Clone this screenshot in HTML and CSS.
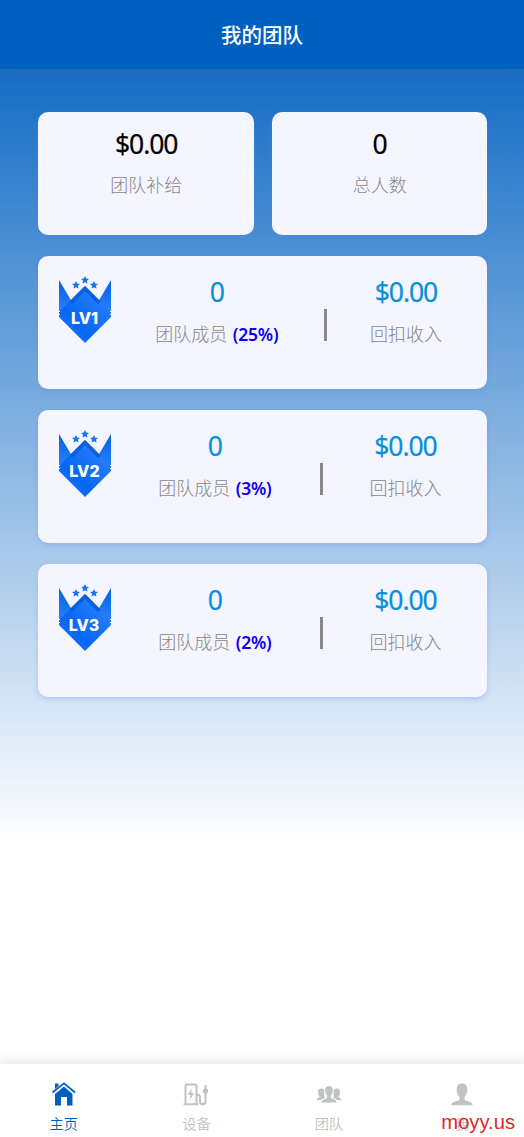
FILE: index.html
```html
<!DOCTYPE html>
<html lang="zh-CN">
<head>
<meta charset="utf-8">
<title>我的团队</title>
<link rel="stylesheet" href="styles.css">
</head>
<body>
<svg class="defs" width="0" height="0">
  <defs>
    <linearGradient id="gem" x1="0" y1="1" x2="1" y2="0"><stop offset="0" stop-color="#1b7af8"/><stop offset=".35" stop-color="#0867f2"/><stop offset="1" stop-color="#3186fb"/></linearGradient>
    <linearGradient id="wing" x1="0" y1="0" x2="0" y2="1"><stop offset="0" stop-color="#0561df"/><stop offset="1" stop-color="#2c84fa"/></linearGradient>
    <path id="star" d="M0-4 1.2-1.4 4-1.1 1.9.8 2.5 3.6 0 2.2-2.5 3.6-1.9.8-4-1.1-1.2-1.4Z" fill="#1677f0"/>
    <g id="badge">
      <path d="M1 4 13.500 25 1 38ZM53 4 40.500 25 53 38Z" fill="url(#wing)"/>
      <path d="M27 10 53 36V41L27 67 1 41V36Z" fill="url(#gem)"/>
      <path d="M27 10 43 26 40 28 27 15 14 28 11 26Z" fill="#0561df"/>
      <path d="M0 35.500H2M0 38.500H2M52 35.500H54M52 38.500H54" stroke="#f4f5ff" stroke-width="1"/>
      <use href="#star" x="27" y="4"/><use href="#star" x="18" y="9"/><use href="#star" x="36" y="9"/>
    </g>
  </defs>
</svg>
<div class="page">
  <header class="header">我的团队</header>
  <main class="content">
    <div class="summary">
      <section class="card stat"><div class="value">$0.00</div><div class="label">团队补给</div></section>
      <section class="card stat"><div class="value">0</div><div class="label">总人数</div></section>
    </div>
    <section class="card level level-wide">
      <svg class="badge" viewBox="0 0 54 68"><use href="#badge"/><text x="26.5" y="47.500" text-anchor="middle">LV1</text></svg>
      <div class="cell"><div class="value">0</div><div class="label">团队成员 <b>(25%)</b></div></div>
      <span class="divider"></span>
      <div class="cell income"><div class="value">$0.00</div><div class="label">回扣收入</div></div>
    </section>
    <section class="card level">
      <svg class="badge" viewBox="0 0 54 68"><use href="#badge"/><text x="26.5" y="47" text-anchor="middle">LV2</text></svg>
      <div class="cell"><div class="value">0</div><div class="label">团队成员 <b>(3%)</b></div></div>
      <span class="divider"></span>
      <div class="cell income"><div class="value">$0.00</div><div class="label">回扣收入</div></div>
    </section>
    <section class="card level">
      <svg class="badge" viewBox="0 0 54 68"><use href="#badge"/><text x="26" y="47" text-anchor="middle">LV3</text></svg>
      <div class="cell"><div class="value">0</div><div class="label">团队成员 <b>(2%)</b></div></div>
      <span class="divider"></span>
      <div class="cell income"><div class="value">$0.00</div><div class="label">回扣收入</div></div>
    </section>
  </main>
  <nav class="tabs">
    <a class="tab active">
      <svg viewBox="0 0 26 26"><path d="M4 2.500H7.500V5L4 8ZM4 13 13 5.500 21.500 13V24.500H16V16H10V24.500H4Z"/><path d="M1.500 11.500 13 2.300 24 11.500" fill="none" stroke="currentColor" stroke-width="1.700"/></svg>
      <span>主页</span>
    </a>
    <a class="tab">
      <svg viewBox="0 0 26 26"><path d="M2.500 23V5Q2.500 3.500 4 3.500H12Q13.500 3.500 13.500 5V23M.500 23.200H15.500M14 14H15.500Q17 14 17 16V20.500C17 24 22.500 24 22.500 20.500V11" fill="none" stroke="currentColor" stroke-width="2"/><path d="M8.800 7.500 4.700 14H7.400L6.800 19 11.200 12.300H8.300ZM20 8H21.500V4H23.500V8H25V11.500L23.500 13H21.500L20 11.500Z"/></svg>
      <span>设备</span>
    </a>
    <a class="tab">
      <svg viewBox="0 0 26 26"><path d="M13 5C10.500 5 9.200 6.600 9.200 9.500C9.200 12 10 13.600 11.200 14.700V16.500C10.500 18 5.500 18 5.500 21.500H20.500C20.500 18 15.500 18 14.800 16.500V14.700C16 13.600 16.800 12 16.800 9.500C16.800 6.600 15.500 5 13 5Z"/><path d="M5 7.500C1.500 7.500 1.800 11 2.200 13C2.600 14.500 3.500 15 3.500 15.700C3.500 17 .500 16.700.500 19H5C6 17.500 8 17.300 9.200 16.400L8.200 15.500C8.700 14 8 12 8.200 9C7.600 8 6.500 7.500 5 7.500ZM21 7.500C24.500 7.500 24.200 11 23.800 13C23.400 14.500 22.500 15 22.500 15.700C22.500 17 25.500 16.700 25.500 19H21C20 17.500 18 17.300 16.800 16.400L17.800 15.500C17.300 14 18 12 17.800 9C18.400 8 19.500 7.500 21 7.500Z"/></svg>
      <span>团队</span>
    </a>
    <a class="tab">
      <svg viewBox="0 0 26 26"><path d="M13 2.500C9.500 2.500 7.700 4.600 7.700 8.500C7.700 12 9 14.500 10.500 16V18.500C9.500 20.500 2.500 20 2.300 24.300H23.700C23.500 20 16.500 20.500 15.500 18.500V16C17 14.500 18.300 12 18.300 8.500C18.300 4.600 16.500 2.500 13 2.500Z"/></svg>
      <span>我</span>
    </a>
  </nav>
  <div class="watermark">moyy.us</div>
</div>
</body>
</html>
```
FILE: styles.css
```css
* { box-sizing: border-box; }
body { margin: 0; font-family: "Noto Sans", "Noto Sans CJK SC", sans-serif; }
.defs { position: absolute; }
.page {
  position: relative;
  display: flex;
  flex-direction: column;
  height: 1137px;
  overflow: hidden;
  background: linear-gradient(#0060c0 0, #fff 843px);
}
.header {
  height: 69px;
  text-align: center;
  color: #fff;
  background: #0060c0;
  font: 500 20.5px/68px "Noto Sans CJK SC", sans-serif;
  box-shadow: 0 2px 12px rgba(100, 101, 102, .25);
}
.content {
  flex: 1;
  display: flex;
  flex-direction: column;
  gap: 20.500px;
  padding: 43.400px 36.600px 0 38.400px;
}
.summary { display: grid; grid-template-columns: 1fr 1fr; gap: 18px; }
.card {
  background: #f4f5ff;
  border-radius: 10px;
  box-shadow: 0 2px 5px rgba(100, 130, 240, .3);
}
.stat { height: 123px; padding-top: 16px; text-align: center; }
.value { font-size: 26.500px; line-height: 32px; letter-spacing: -1.100px; font-weight: 400; color: #000; -webkit-text-stroke: .2px currentColor; }
.label {
  margin-top: 9px;
  font: 300 18px/32px "Noto Sans CJK SC", sans-serif;
  color: #888;
  white-space: nowrap;
}
.stat .label { margin-top: 8px; }
.label b { margin-left: 1.500px; font: 600 17.500px/24px "Noto Sans", sans-serif; letter-spacing: -.2px; color: #0d00f5; }
.level {
  display: grid;
  grid-template-columns: 92px 170px 42px 1fr;
  height: 133.400px;
  padding-top: 20.500px;
  align-items: start;
}
.level .value { margin-left: -1px; color: #078fda; }
.level .label { margin-left: -1px; }
.level-wide { grid-template-columns: 92px 174px 42px 1fr; }
.badge { width: 54px; height: 68px; margin-left: 19.500px; overflow: visible; }
.badge text { font: 800 16px "Inter", sans-serif; fill: #fff; }
.cell { text-align: center; }
.income { justify-self: end; width: 120px; margin-right: 21.500px; }
.divider { justify-self: center; width: 3px; height: 32px; margin-top: 32.500px; background: #888; }
.tabs {
  display: grid;
  grid-template-columns: repeat(4, 1fr);
  height: 73.500px;
  margin: 0 -4px 0 -2.500px;
  padding-top: 17px;
  background: #fff;
  box-shadow: 0 -2px 12px rgba(100, 101, 102, .18);
}
.tab { display: flex; flex-direction: column; align-items: center; color: #bfc3c2; }
.tab.active { color: #0060c0; }
.tab svg { width: 26px; height: 26px; fill: currentColor; }
.tab span { margin-top: 6px; font: 350 14.200px/20px "Noto Sans CJK SC", sans-serif; }
.watermark {
  position: absolute;
  right: 9px;
  bottom: 3px;
  font: 20.200px/24px "Liberation Sans", sans-serif;
  color: #de2929;
}
```
